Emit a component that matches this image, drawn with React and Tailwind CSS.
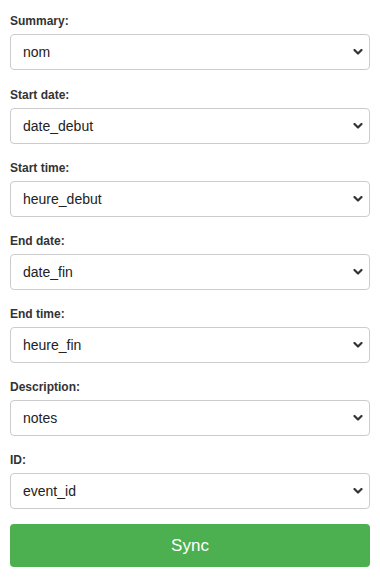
const fields = [
  { label: 'Summary:', value: 'nom' },
  { label: 'Start date:', value: 'date_debut' },
  { label: 'Start time:', value: 'heure_debut' },
  { label: 'End date:', value: 'date_fin' },
  { label: 'End time:', value: 'heure_fin' },
  { label: 'Description:', value: 'notes' },
  { label: 'ID:', value: 'event_id' },
]

function Chevron() {
  return (
    <svg className="pointer-events-none absolute right-[7px] top-1/2 -translate-y-1/2" width="10" height="7" viewBox="0 0 10 7">
      <path d="M1.5 1.5 L5 5 L8.5 1.5" fill="none" stroke="#333" strokeWidth="2.2" strokeLinecap="round" strokeLinejoin="round" />
    </svg>
  )
}

function Field({ label, value, first }) {
  return (
    <div className={first ? 'mb-[18px]' : 'mb-[17px]'}>
      <label className="block text-[12px] leading-[14px] font-bold text-[#333] mb-[6px]">{label}</label>
      <div className="relative">
        <select
          defaultValue={value}
          className="block w-full h-[36px] appearance-none rounded-[4px] border border-[#ccc] bg-white pl-[12px] pr-[28px] text-[14px] text-[#222] outline-none"
        >
          <option value={value}>{value}</option>
        </select>
        <Chevron />
      </div>
    </div>
  )
}

export default function App() {
  return (
    <div className="min-h-screen bg-white px-[10px] pt-[14px] font-['Liberation_Sans',Arial,sans-serif]">
      {fields.map((f, i) => <Field key={f.label} first={i === 0} {...f} />)}
      <button className="-mt-[2px] block w-full h-[43px] rounded-[4px] bg-[#4caf50] text-white text-[17px]">
        Sync
      </button>
    </div>
  )
}
